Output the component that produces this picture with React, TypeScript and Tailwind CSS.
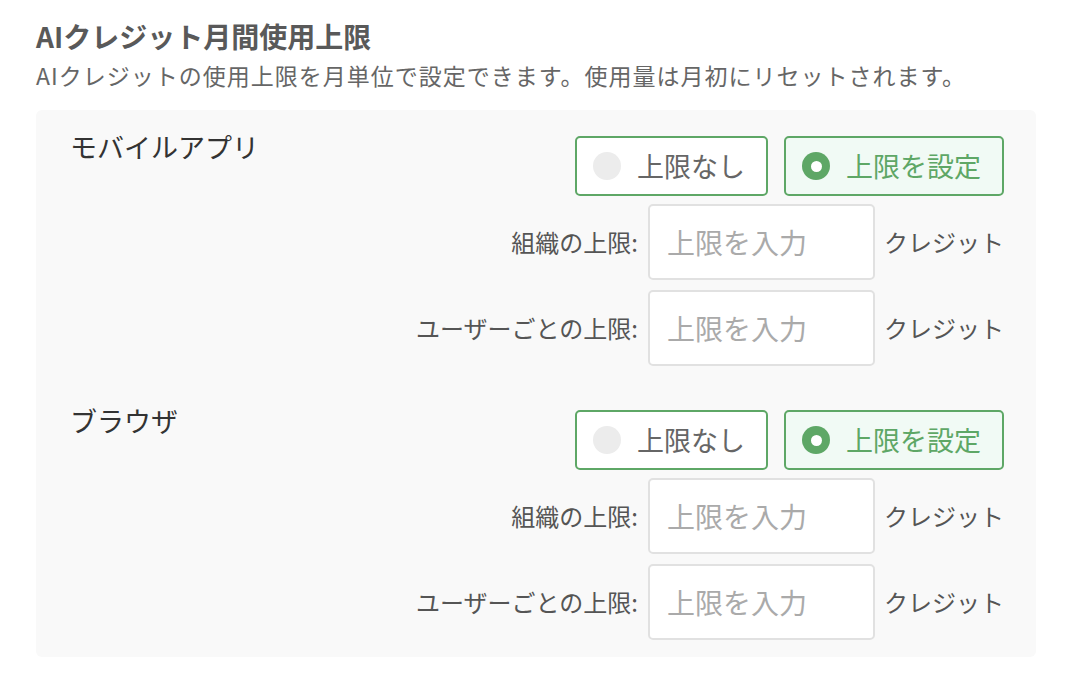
import React from "react";

const FONT = "font-['Noto_Sans_CJK_JP','Noto_Sans',sans-serif]";

function RadioOption({ label, checked }: { label: string; checked: boolean }) {
  return (
    <div
      className={`h-[60px] flex items-center gap-4 pl-[16px] pr-[21px] border-2 rounded-[5px] border-[#5ea766] ${
        checked ? "bg-[#f1faf5]" : "bg-white"
      }`}
    >
      {checked ? (
        <span className="w-[28px] h-[28px] rounded-full bg-[#5ea766] flex items-center justify-center">
          <span className="w-[11px] h-[11px] rounded-full bg-white" />
        </span>
      ) : (
        <span className="w-[28px] h-[28px] rounded-full bg-[#ececec]" />
      )}
      <span className={`text-[27px] ${checked ? "text-[#5ea766]" : "text-[#666]"}`}>{label}</span>
    </div>
  );
}

function LimitRow({ label }: { label: string }) {
  return (
    <div className="flex items-center">
      <span className="text-[24px] text-[#555] mr-[10px]">{label}</span>
      <input
        placeholder="上限を入力"
        className="w-[227px] h-[76px] bg-white border-2 border-[#e1e1e1] rounded-[5px] px-[17px] text-[28px] text-[#333] placeholder:text-[#aaa] outline-none"
      />
      <span className="text-[24px] text-[#555] ml-[9px]">クレジット</span>
    </div>
  );
}

function Section({ title }: { title: string }) {
  return (
    <div className="flex justify-between">
      <div className="text-[27px] text-[#333] leading-[36px] pt-[1px]">{title}</div>
      <div className="flex flex-col items-end pt-[8px]">
        <div className="flex gap-4 mb-[8px]">
          <RadioOption label="上限なし" checked={false} />
          <RadioOption label="上限を設定" checked={true} />
        </div>
        <div className="flex flex-col items-end gap-[10px]">
          <LimitRow label="組織の上限:" />
          <LimitRow label="ユーザーごとの上限:" />
        </div>
      </div>
    </div>
  );
}

export default function App() {
  return (
    <div className={`${FONT} bg-white w-[1072px] h-[690px] px-[36px] pt-[17px]`}>
      <h2 className="text-[28px] font-bold text-[#595959] leading-[38px]">AIクレジット月間使用上限</h2>
      <p className="text-[23px] text-[#666] tracking-[1px] leading-[36px] mt-[2px]">
        AIクレジットの使用上限を月単位で設定できます。使用量は月初にリセットされます。
      </p>
      <div className="mt-[17px] bg-[#f9f9f9] rounded-[6px] pl-[34px] pr-[32px] pt-[18px] pb-[17px] flex flex-col gap-[36px]">
        <Section title="モバイルアプリ" />
        <Section title="ブラウザ" />
      </div>
    </div>
  );
}
